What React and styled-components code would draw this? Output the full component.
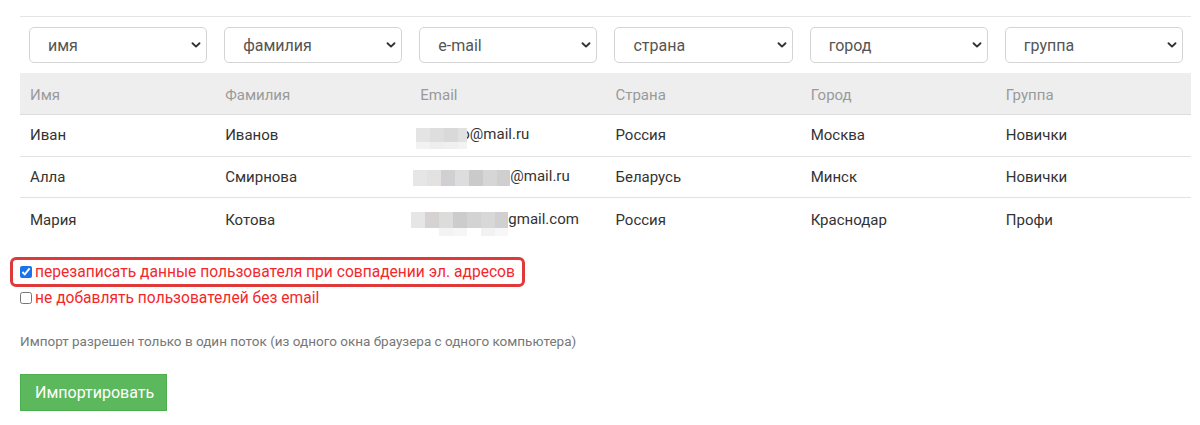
import React from "react";
import styled, { createGlobalStyle } from "styled-components";

const Global = createGlobalStyle`
  html, body { margin: 0; padding: 0; background: #fff; }
  body { font-family: Roboto, "Liberation Sans", Arial, sans-serif; color: #333; }
`;

const Page = styled.div`
  padding: 16px 0 0 20px;
`;

const Panel = styled.div`
  width: 1171px;
  border-top: 1px solid #e5e5e5;
`;

const Table = styled.table`
  width: 1171px;
  table-layout: fixed;
  border-collapse: collapse;
  font-size: 15px;
`;

const SelectCell = styled.td`
  padding: 10px 8px 10px 9px;
`;

const SelectBox = styled.div`
  height: 36px;
  box-sizing: border-box;
  border: 1px solid #d4d4d4;
  border-radius: 5px;
  display: flex;
  align-items: center;
  justify-content: space-between;
  padding: 0 3px 0 18px;
  font-size: 16px;
  color: #555;
  background: #fff;
`;

const HeadRow = styled.tr`
  background: #eeeeee;
`;

const Th = styled.th`
  text-align: left;
  font-weight: 400;
  color: #9a9a9a;
  padding: 12px 10px 8px;
  height: 41px;
  box-sizing: border-box;
  border-bottom: 1px solid #dedede;
`;

const Row = styled.tr`
  border-bottom: ${(p) => (p.$last ? "none" : "1px solid #e2e2e2")};
`;

const Td = styled.td`
  padding: 10px;
  height: 41px;
  box-sizing: border-box;
  color: #333;
  white-space: nowrap;
`;

const Mosaic = styled.span`
  display: inline-grid;
  grid-template-columns: ${(p) => p.$cols};
  grid-auto-rows: ${(p) => p.$rows};
  vertical-align: middle;
  margin-left: ${(p) => p.$ml}px;
  margin-right: ${(p) => p.$mr}px;
  position: relative;
  top: ${(p) => p.$top}px;
`;

const Cell = styled.span`
  display: block;
  background: ${(p) => p.$c};
`;

const Options = styled.div`
  margin-top: 15px;
  display: flex;
  flex-direction: column;
  align-items: flex-start;
`;

const OptionLabel = styled.label`
  display: inline-flex;
  align-items: center;
  gap: 2px;
  font-size: 15.6px;
  color: #f4282c;
  line-height: 20px;
  box-sizing: border-box;
  ${(p) =>
    p.$highlight
      ? `
    border: 3px solid #e0393a;
    border-radius: 6px;
    padding: 2px 7px 2px 7px;
    margin-left: -10px;
  `
      : `
    padding: 0;
    margin-top: 1px;
  `}
`;

const Check = styled.input`
  width: 12px;
  height: 12px;
  margin: 0 1px 0 0;
  accent-color: #1a73e8;
`;

const Note = styled.p`
  margin: 24px 0 0;
  font-size: 13.5px;
  color: #777;
  line-height: 18px;
`;

const Button = styled.button`
  margin-top: 24px;
  background: #5cb85c;
  border: 1px solid #4cae4c;
  color: #fff;
  font-family: inherit;
  font-size: 16px;
  padding: 0 14px;
  height: 37px;
  width: 147px;
  border-radius: 0;
`;

const Chevron = () => (
  <svg width="14" height="14" viewBox="0 0 14 14">
    <path d="M3.5 5.2 L7 8.6 L10.5 5.2" fill="none" stroke="#333" strokeWidth="1.9" strokeLinecap="round" strokeLinejoin="round" />
  </svg>
);

const selects = ["имя", "фамилия", "e-mail", "страна", "город", "группа"];
const heads = ["Имя", "Фамилия", "Email", "Страна", "Город", "Группа"];

const rows = [
  {
    first: "Иван", last: "Иванов", country: "Россия", city: "Москва", group: "Новички",
    suffix: "o@mail.ru",
    mosaic: { ml: -4, mr: -6, top: 3, cols: "14px 14px 14px 9px", rows: "14px 7px",
      cells: ["#e4e4e4", "#dedede", "#d9d9d9", "#e1e1e1", "#f2f2f2", "#eeeeee", "#f0f0f0", "#f3f3f3"] },
  },
  {
    first: "Алла", last: "Смирнова", country: "Беларусь", city: "Минск", group: "Новички",
    suffix: "@mail.ru",
    mosaic: { ml: -7, mr: 0, top: 0, cols: "14px 14px 14px 14px 14px 14px 13px", rows: "16px",
      cells: ["#e6e6e6", "#e4e2e0", "#d0d0d2", "#dddddd", "#cacaca", "#d6d6d6", "#cfcfcf"] },
  },
  {
    first: "Мария", last: "Котова", country: "Россия", city: "Краснодар", group: "Профи",
    suffix: "gmail.com",
    mosaic: { ml: -9, mr: 0, top: 4, cols: "14px 14px 14px 14px 14px 14px 13px", rows: "16px 8px",
      cells: ["#e6e6e6", "#d6d2d2", "#dcdcdc", "#cccccc", "#d3d3d3", "#d8d8d8", "#d0d0d0",
        "#ffffff", "#ffffff", "#f3f3f3", "#f6f6f6", "#ffffff", "#f2f2f2", "#f7f7f7"] },
  },
];

export default function App() {
  return (
    <>
      <Global />
      <Page>
        <Panel>
          <Table>
            <tbody>
              <tr>
                {selects.map((s) => (
                  <SelectCell key={s}>
                    <SelectBox>
                      <span>{s}</span>
                      <Chevron />
                    </SelectBox>
                  </SelectCell>
                ))}
              </tr>
              <HeadRow>
                {heads.map((h) => (
                  <Th key={h}>{h}</Th>
                ))}
              </HeadRow>
              {rows.map((r, i) => (
                <Row key={r.first} $last={i === rows.length - 1}>
                  <Td>{r.first}</Td>
                  <Td>{r.last}</Td>
                  <Td>
                    <Mosaic
                      $ml={r.mosaic.ml}
                      $mr={r.mosaic.mr}
                      $top={r.mosaic.top}
                      $cols={r.mosaic.cols}
                      $rows={r.mosaic.rows}
                    >
                      {r.mosaic.cells.map((c, j) => (
                        <Cell key={j} $c={c} />
                      ))}
                    </Mosaic>
                    {r.suffix}
                  </Td>
                  <Td>{r.country}</Td>
                  <Td>{r.city}</Td>
                  <Td>{r.group}</Td>
                </Row>
              ))}
            </tbody>
          </Table>
        </Panel>
        <Options>
          <OptionLabel $highlight>
            <Check type="checkbox" defaultChecked />
            перезаписать данные пользователя при совпадении эл. адресов
          </OptionLabel>
          <OptionLabel>
            <Check type="checkbox" />
            не добавлять пользователей без email
          </OptionLabel>
        </Options>
        <Note>Импорт разрешен только в один поток (из одного окна браузера с одного компьютера)</Note>
        <Button>Импортировать</Button>
      </Page>
    </>
  );
}
